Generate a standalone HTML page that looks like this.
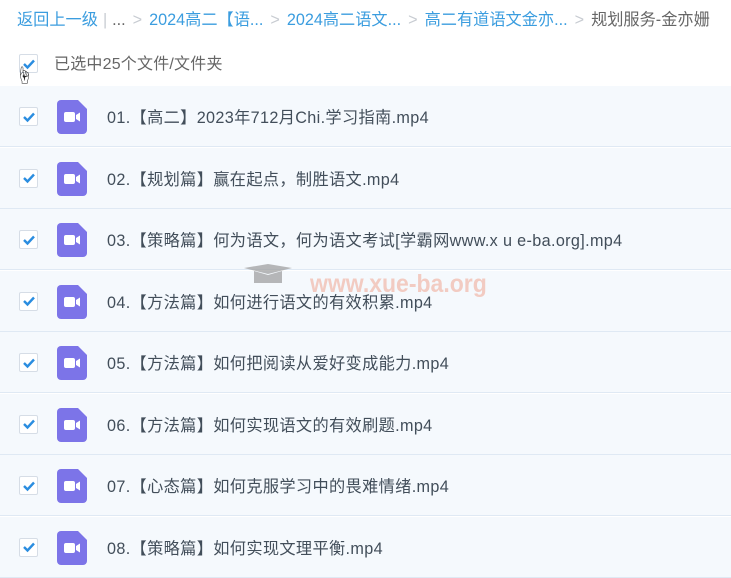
<!DOCTYPE html>
<html><head><meta charset="utf-8"><style>
body{margin:0;width:731px;height:577px;overflow:hidden;background:#fff;font-family:"Liberation Sans","Noto Sans CJK SC",sans-serif;}
.bc{position:absolute;top:6px;left:17px;font-size:16.2px;color:#3b9ddf;white-space:nowrap;}
.bc .g{color:#c8ccd2;margin:0 7px;}
.bc .d{color:#666;}
.bc .s{color:#c8ccd2;}
.sel{position:absolute;top:50px;left:54px;font-size:16px;color:#666;letter-spacing:0.2px}
.cb{position:absolute;width:17px;height:17px;border:1px solid #d6dde6;border-radius:2px;background:#fff;}
.cb svg{position:absolute;left:1.5px;top:2.5px}
.row{position:absolute;left:0;width:731px;height:60px;background:#f5f9fd;border-bottom:1.5px solid #dfe9f4;}
.row .cb{left:19px;top:21px}
.row .ic{position:absolute;left:57px;top:14px}
.row .t{position:absolute;left:107px;top:18px;font-size:16.2px;color:#424e5a;white-space:nowrap;letter-spacing:0.35px}
.wm{position:absolute;left:310px;top:270px;font:bold 25px "Liberation Sans",sans-serif;color:#f2c4b8;opacity:.85;transform:scaleX(0.92);transform-origin:left}
</style></head><body>
<div class="bc">返回上一级<span class="s" style="margin:0 5px">|</span><span class="d">...</span><span class="g">&gt;</span>2024高二【语...<span class="g">&gt;</span>2024高二语文...<span class="g">&gt;</span>高二有道语文金亦...<span class="g">&gt;</span><span class="d">规划服务-金亦姗</span></div>
<div class="cb" style="left:19px;top:54px"><svg width="14" height="12"><path d="M2 6l3.5 3.5L12 2.5" stroke="#2a8de0" stroke-width="2.4" fill="none"/></svg></div>
<div class="sel">已选中25个文件/文件夹</div>
<div style="position:absolute;left:15px;top:62px;font-size:18px;color:#222">☝</div>
<div class="row" style="top:86px"><div class="cb"><svg width="14" height="12"><path d="M2 6l3.5 3.5L12 2.5" stroke="#2a8de0" stroke-width="2.4" fill="none"/></svg></div><svg class="ic" width="30" height="34"><path d="M4 0h17l9 9v21a4 4 0 0 1-4 4H4a4 4 0 0 1-4-4V4a4 4 0 0 1 4-4z" fill="#7c74e8"/><rect x="7" y="12" width="11" height="10" rx="2" fill="#fff"/><path d="M19 15l4-2.5v9L19 19z" fill="#fff"/></svg><div class="t">01.【高二】2023年712月Chi.学习指南.mp4</div></div>
<div class="row" style="top:147.5px"><div class="cb"><svg width="14" height="12"><path d="M2 6l3.5 3.5L12 2.5" stroke="#2a8de0" stroke-width="2.4" fill="none"/></svg></div><svg class="ic" width="30" height="34"><path d="M4 0h17l9 9v21a4 4 0 0 1-4 4H4a4 4 0 0 1-4-4V4a4 4 0 0 1 4-4z" fill="#7c74e8"/><rect x="7" y="12" width="11" height="10" rx="2" fill="#fff"/><path d="M19 15l4-2.5v9L19 19z" fill="#fff"/></svg><div class="t">02.【规划篇】赢在起点，制胜语文.mp4</div></div>
<div class="row" style="top:209px"><div class="cb"><svg width="14" height="12"><path d="M2 6l3.5 3.5L12 2.5" stroke="#2a8de0" stroke-width="2.4" fill="none"/></svg></div><svg class="ic" width="30" height="34"><path d="M4 0h17l9 9v21a4 4 0 0 1-4 4H4a4 4 0 0 1-4-4V4a4 4 0 0 1 4-4z" fill="#7c74e8"/><rect x="7" y="12" width="11" height="10" rx="2" fill="#fff"/><path d="M19 15l4-2.5v9L19 19z" fill="#fff"/></svg><div class="t">03.【策略篇】何为语文，何为语文考试[学霸网www.x u e-ba.org].mp4</div></div>
<div class="row" style="top:270.5px"><div class="cb"><svg width="14" height="12"><path d="M2 6l3.5 3.5L12 2.5" stroke="#2a8de0" stroke-width="2.4" fill="none"/></svg></div><svg class="ic" width="30" height="34"><path d="M4 0h17l9 9v21a4 4 0 0 1-4 4H4a4 4 0 0 1-4-4V4a4 4 0 0 1 4-4z" fill="#7c74e8"/><rect x="7" y="12" width="11" height="10" rx="2" fill="#fff"/><path d="M19 15l4-2.5v9L19 19z" fill="#fff"/></svg><div class="t">04.【方法篇】如何进行语文的有效积累.mp4</div></div>
<div class="row" style="top:332px"><div class="cb"><svg width="14" height="12"><path d="M2 6l3.5 3.5L12 2.5" stroke="#2a8de0" stroke-width="2.4" fill="none"/></svg></div><svg class="ic" width="30" height="34"><path d="M4 0h17l9 9v21a4 4 0 0 1-4 4H4a4 4 0 0 1-4-4V4a4 4 0 0 1 4-4z" fill="#7c74e8"/><rect x="7" y="12" width="11" height="10" rx="2" fill="#fff"/><path d="M19 15l4-2.5v9L19 19z" fill="#fff"/></svg><div class="t">05.【方法篇】如何把阅读从爱好变成能力.mp4</div></div>
<div class="row" style="top:393.5px"><div class="cb"><svg width="14" height="12"><path d="M2 6l3.5 3.5L12 2.5" stroke="#2a8de0" stroke-width="2.4" fill="none"/></svg></div><svg class="ic" width="30" height="34"><path d="M4 0h17l9 9v21a4 4 0 0 1-4 4H4a4 4 0 0 1-4-4V4a4 4 0 0 1 4-4z" fill="#7c74e8"/><rect x="7" y="12" width="11" height="10" rx="2" fill="#fff"/><path d="M19 15l4-2.5v9L19 19z" fill="#fff"/></svg><div class="t">06.【方法篇】如何实现语文的有效刷题.mp4</div></div>
<div class="row" style="top:455px"><div class="cb"><svg width="14" height="12"><path d="M2 6l3.5 3.5L12 2.5" stroke="#2a8de0" stroke-width="2.4" fill="none"/></svg></div><svg class="ic" width="30" height="34"><path d="M4 0h17l9 9v21a4 4 0 0 1-4 4H4a4 4 0 0 1-4-4V4a4 4 0 0 1 4-4z" fill="#7c74e8"/><rect x="7" y="12" width="11" height="10" rx="2" fill="#fff"/><path d="M19 15l4-2.5v9L19 19z" fill="#fff"/></svg><div class="t">07.【心态篇】如何克服学习中的畏难情绪.mp4</div></div>
<div class="row" style="top:516.5px"><div class="cb"><svg width="14" height="12"><path d="M2 6l3.5 3.5L12 2.5" stroke="#2a8de0" stroke-width="2.4" fill="none"/></svg></div><svg class="ic" width="30" height="34"><path d="M4 0h17l9 9v21a4 4 0 0 1-4 4H4a4 4 0 0 1-4-4V4a4 4 0 0 1 4-4z" fill="#7c74e8"/><rect x="7" y="12" width="11" height="10" rx="2" fill="#fff"/><path d="M19 15l4-2.5v9L19 19z" fill="#fff"/></svg><div class="t">08.【策略篇】如何实现文理平衡.mp4</div></div>
<svg style="position:absolute;left:240px;top:262px" width="56" height="30"><path d="M4 6l24-4 24 4-24 6z" fill="#9a9a9a" opacity=".7"/><path d="M14 9v12h28V9l-14 4z" fill="#9a9a9a" opacity=".7"/></svg>
<div class="wm">www.xue-ba.org</div>
</body></html>
